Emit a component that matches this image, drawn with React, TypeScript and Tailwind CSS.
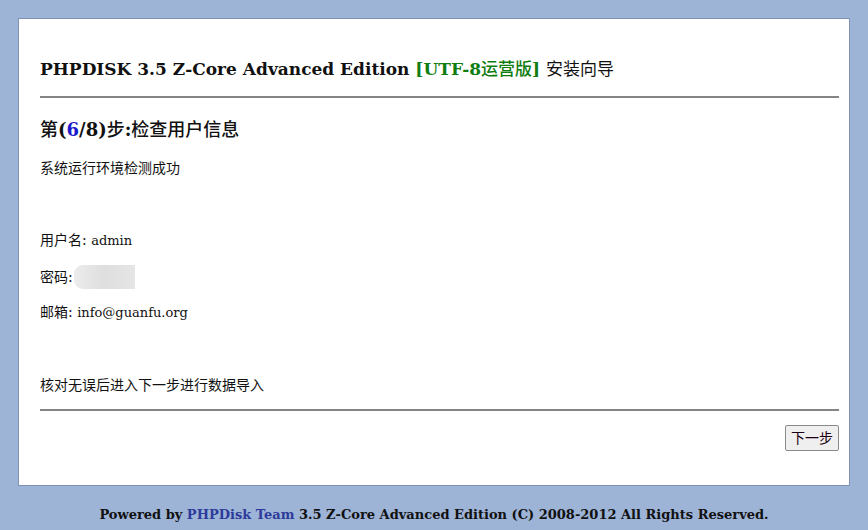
export default function App() {
  const serif = "font-['Georgia','DejaVu_Serif','Noto_Sans_CJK_SC',serif]"
  return (
    <div className={`min-h-[530px] bg-[#9db4d7] pt-[18px] text-[#111] ${serif}`}>
      <div className="mx-[18px] border border-[#7d92b5] bg-white pl-[21px] pr-[10px] pb-[34px]">
        <h1 className="pt-[38px] pb-[15px] text-[17px] leading-[24px] font-bold">
          PHPDISK 3.5 Z-Core Advanced Edition{" "}
          <span className="text-[#0f7d0f]">[UTF-8<span className="font-medium">运营版</span>]</span>{" "}
          <span className="font-normal">安装向导</span>
        </h1>
        <hr className="h-[2px] border-0 bg-[#858585]" />
        <h2 className="mt-[20px] text-[18px] leading-[24px] font-bold">
          <span className="font-medium">第</span>(<span className="text-[#1a1acc]">6</span>/8)
          <span className="font-medium">步</span>:
          <span className="font-medium">检查用户信息</span>
        </h2>
        <div className="text-[14px] leading-[20px]">
          <p className="mt-[16px]">系统运行环境检测成功</p>
          <p className="mt-[52px]">
            用户名: <span className="text-[13px]">admin</span>
          </p>
          <p className="mt-[14px] flex items-center">
            密码:
            <span className="ml-[1px] inline-block h-[24px] w-[61px] rounded-l-[9px] bg-gradient-to-r from-[#ececec] via-[#dedede] to-[#e6e6e6]" />
          </p>
          <p className="mt-[13px]">
            邮箱: <span className="text-[13px]">info@guanfu.org</span>
          </p>
          <p className="mt-[52px]">核对无误后进入下一步进行数据导入</p>
        </div>
        <hr className="mt-[14px] h-[2px] border-0 bg-[#858585]" />
        <div className="mt-[14px] flex justify-end">
          <button className="h-[26px] rounded-[2px] border border-[#8a8a8a] bg-[#efefef] px-[5px] text-[14px] leading-[20px] text-[#1a0010]">
            下一步
          </button>
        </div>
      </div>
      <div className="py-[20px] text-center text-[13px] leading-[18px] font-bold">
        Powered by <span className="text-[#2e3a9a]">PHPDisk Team</span> 3.5 Z-Core Advanced Edition (C) 2008-2012 All Rights Reserved.
      </div>
    </div>
  )
}
